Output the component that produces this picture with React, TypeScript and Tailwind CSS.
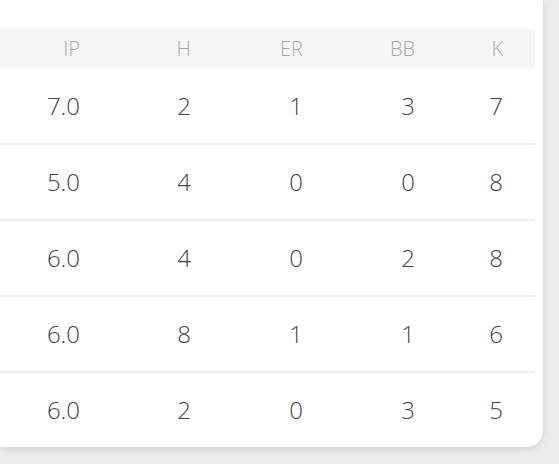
const rows = [
  ["7.0", "2", "1", "3", "7"],
  ["5.0", "4", "0", "0", "8"],
  ["6.0", "4", "0", "2", "8"],
  ["6.0", "8", "1", "1", "6"],
  ["6.0", "2", "0", "3", "5"],
];

const headers = ["IP", "H", "ER", "BB", "K"];

export default function App() {
  return (
    <div
      className="w-[559px] h-[464px] bg-[#ebebeb] overflow-hidden"
      style={{ fontFamily: '"Open Sans", "Liberation Sans", sans-serif' }}
    >
      <div className="w-[543px] h-[447px] bg-white rounded-br-[16px] shadow-[0_2px_6px_rgba(0,0,0,0.12)] pt-[29px] pr-[8px]">
        {/* Header */}
        <div className="h-[40px] bg-[#f6f6f6] grid grid-cols-[80px_111px_112px_112px_88px] items-center text-right text-[20px] font-light text-[#a8a8a8]">
          {headers.map((h) => (
            <span key={h}>{h}</span>
          ))}
        </div>

        {/* Rows */}
        {rows.map((r, i) => (
          <div
            key={i}
            className={`grid grid-cols-[80px_111px_112px_112px_88px] items-center text-right text-[24px] font-light text-[#444444] ${
              i < rows.length - 1 ? "h-[76px] border-b-2 border-[#ececec]" : "h-[74px]"
            }`}
          >
            {r.map((v, j) => (
              <span key={j}>{v}</span>
            ))}
          </div>
        ))}
      </div>
    </div>
  );
}
